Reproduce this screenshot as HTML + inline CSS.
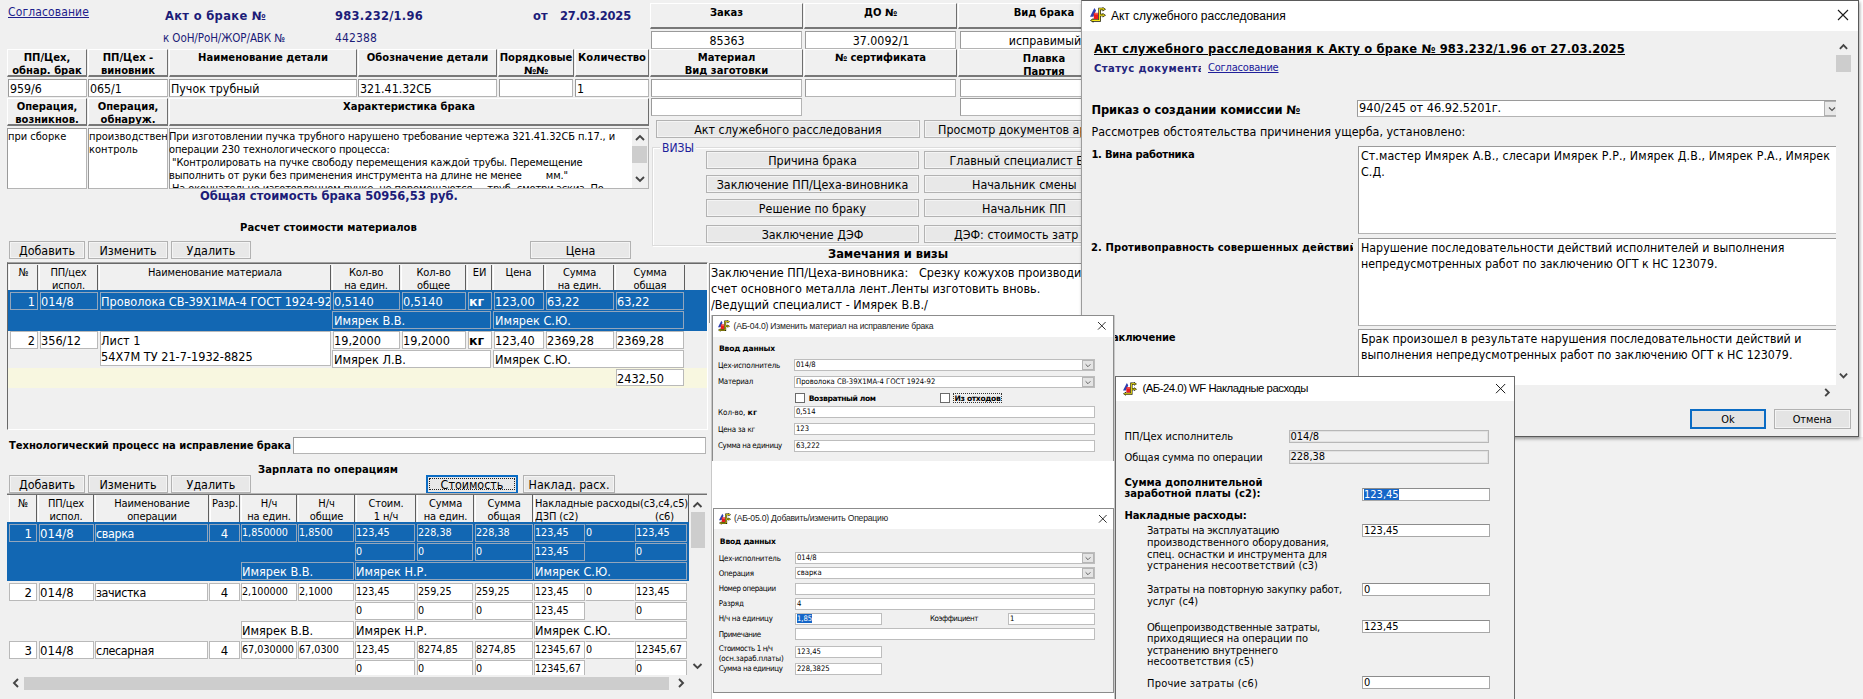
<!DOCTYPE html><html><head><meta charset="utf-8"><title>Акт о браке</title><style>
html,body{margin:0;padding:0}
body{width:1863px;height:699px;overflow:hidden;background:#fff;font-family:"DejaVu Sans Condensed","DejaVu Sans","Liberation Sans",sans-serif;font-size:12px;font-stretch:condensed;color:#000;position:relative}
.a{position:absolute;box-sizing:border-box;overflow:hidden;white-space:nowrap}
.t{overflow:visible;line-height:1}
.lib{font-stretch:normal;font-family:"Liberation Sans","DejaVu Sans",sans-serif}
.form{background:#f0f0f0}
.hd{font-stretch:normal;background:#f0f0f0;border-top:1px solid #fff;border-left:1px solid #fff;border-right:1px solid #6e6e6e;border-bottom:2px solid #787878;font-weight:bold;font-family:"DejaVu Sans","Liberation Sans",sans-serif;font-size:10px;line-height:13px;text-align:center;white-space:normal;padding-top:1px}
.in{background:#fff;border:1px solid #b4b4b4;border-top-color:#9a9a9a;border-left-color:#9a9a9a;font-size:12.3px;line-height:18px;padding-left:1px}
.ta{background:#fff;border:1px solid #b4b4b4;border-top-color:#9a9a9a;border-left-color:#9a9a9a;font-size:11px;line-height:13px;white-space:normal}
.bt{background:#e8e8e8;border:1px solid #b2b2b2;box-shadow:inset 0 0 0 1px #f4f4f4;font-size:12.4px;text-align:center;line-height:17px}
.navy{color:#1c1c78}
.b,b{font-stretch:normal;font-weight:bold;font-family:"DejaVu Sans","Liberation Sans",sans-serif}
.th{background:#f0f0f0;border-left:1px solid #fff;border-right:1px solid #5e5e5e;font-size:11px;line-height:13px;text-align:center;white-space:normal;padding-top:1px;letter-spacing:-.12px}
.c{background:#fff;border:1px solid #b9b9b9;font-size:12.6px;line-height:17px;padding-left:0}
.c.s{background:#1267b3;color:#fff;border-color:#93a6bc}
.c.sm{font-size:10.7px;line-height:15px}
.r{text-align:right;padding-right:2px}
.ctr{text-align:center}
.dlg{background:#f0f0f0;border:1px solid #6f6f6f}
.tb{background:#fff}
.sin{background:#fff;border:1px solid #bdbdbd;font-size:7.6px;line-height:10.5px;padding-left:1px}
.win{background:#fff;border:1px solid #a8a8a8;border-top-color:#8c8c8c;font-size:11px;line-height:12px;padding-left:1px}
.wdis{background:#f0f0f0;border:1px solid #b8b8b8;box-shadow:inset 0 0 0 1px #e2e2e2;font-size:11px;line-height:12px;padding-left:1px}
.hl{background:#1566c8;color:#fff}
</style></head><body>
<div class="a form" style="left:0px;top:0px;width:1082px;height:699px;"></div>
<div class="a t navy" style="left:8px;top:5.64px;font-size:12px;letter-spacing:0.119px;text-decoration:underline;color:#1e1e8c">Согласование</div>
<div class="a t navy b" style="left:165px;top:10.90px;font-size:11.5px;letter-spacing:0.327px;">Акт о браке №</div>
<div class="a t navy b" style="left:335px;top:10.90px;font-size:11.5px;letter-spacing:0.254px;">983.232/1.96</div>
<div class="a t navy b" style="left:533px;top:10.90px;font-size:11.5px;">от</div>
<div class="a t navy b" style="left:560px;top:10.90px;font-size:11.5px;letter-spacing:-0.175px;">27.03.2025</div>
<div class="a t navy" style="left:163px;top:32.70px;font-size:11.5px;letter-spacing:-0.089px;">к ОоН/РоН/ЖОР/АВК №</div>
<div class="a t navy" style="left:335px;top:32.44px;font-size:12px;letter-spacing:0.133px;">442388</div>
<div class="a hd" style="left:7px;top:49px;width:80px;height:28px;">ПП/Цех, обнар. брак</div>
<div class="a hd" style="left:88px;top:49px;width:80px;height:28px;">ПП/Цех - виновник</div>
<div class="a hd" style="left:169px;top:49px;width:188px;height:28px;">Наименование детали</div>
<div class="a hd" style="left:358px;top:49px;width:139px;height:28px;">Обозначение детали</div>
<div class="a hd" style="left:498px;top:49px;width:76px;height:28px;">Порядковые №№</div>
<div class="a hd" style="left:575px;top:49px;width:74px;height:28px;">Количество</div>
<div class="a in" style="left:8px;top:79px;width:79px;height:18px;">959/6</div>
<div class="a in" style="left:88px;top:79px;width:80px;height:18px;">065/1</div>
<div class="a in" style="left:169px;top:79px;width:188px;height:18px;">Пучок трубный</div>
<div class="a in" style="left:358px;top:79px;width:139px;height:18px;">321.41.32СБ</div>
<div class="a in" style="left:499px;top:79px;width:74px;height:18px;"></div>
<div class="a in" style="left:575px;top:79px;width:74px;height:18px;">1</div>
<div class="a hd" style="left:7px;top:98px;width:80px;height:28px;">Операция, возникнов.</div>
<div class="a hd" style="left:88px;top:98px;width:80px;height:28px;">Операция, обнаруж.</div>
<div class="a hd" style="left:169px;top:98px;width:480px;height:28px;">Характеристика брака</div>
<div class="a ta" style="left:7px;top:128px;width:80px;height:61px;padding-left:0px;padding-top:1px">при сборке</div>
<div class="a ta" style="left:88px;top:128px;width:80px;height:61px;padding-top:1px">производствен контроль</div>
<div class="a ta" style="left:169px;top:128px;width:480px;height:61px;"></div>
<div class="a" style="left:169px;top:130px;width:463px;height:58px;font-size:11px;line-height:13px;letter-spacing:-0.13px">При изготовлении пучка трубного нарушено требование чертежа 321.41.32СБ п.17., и<br>операции 230 технологического процесса:<br>&nbsp;"Контролировать на пучке свободу перемещения каждой трубы. Перемещение<br>выполнить от руки без применения инструмента на длине не менее&nbsp;&nbsp;&nbsp;&nbsp;&nbsp;&nbsp;&nbsp;&nbsp;мм."<br>&nbsp;На окончательно изготовленном пучке, не перемещаются &nbsp;&nbsp;&nbsp; труб, смотри эскиз. По</div>
<div class="a " style="left:632px;top:129px;width:16px;height:59px;background:#f0f0f0"></div>
<div class="a " style="left:632px;top:146px;width:15px;height:17px;background:#cdcdcd"></div>
<svg class="a" style="left:632px;top:129px" width="16" height="59"><path d="M4 11 L8 7 L12 11" fill="none" stroke="#454545" stroke-width="1.9"/><path d="M4 48 L8 52 L12 48" fill="none" stroke="#454545" stroke-width="1.9"/></svg>
<div class="a t navy b" style="left:200px;top:190.91px;font-size:11.5px;letter-spacing:0.021px;">Общая стоимость брака 50956,53 руб.</div>
<div class="a t  b" style="left:240px;top:222.70px;font-size:10px;letter-spacing:0.084px;">Расчет стоимости материалов</div>
<div class="a bt" style="left:9px;top:241px;width:76px;height:18px;">Добавить</div>
<div class="a bt" style="left:88px;top:241px;width:80px;height:18px;">Изменить</div>
<div class="a bt" style="left:171px;top:241px;width:80px;height:18px;">Удалить</div>
<div class="a bt" style="left:530px;top:241px;width:101px;height:18px;">Цена</div>
<div class="a " style="left:7px;top:262px;width:701px;height:168px;background:#f0f0f0;border-top:1px solid #a0a0a0;border-left:1px solid #696969;border-right:1px solid #fff;border-bottom:1px solid #fff;box-shadow:inset 0 1px 0 #696969"></div>
<div class="a th" style="left:9px;top:265px;width:29px;height:25px;">№</div>
<div class="a th" style="left:39px;top:265px;width:59px;height:25px;">ПП/цех<br>испол.</div>
<div class="a th" style="left:99px;top:265px;width:232px;height:25px;">Наименование материала</div>
<div class="a th" style="left:332px;top:265px;width:68px;height:25px;">Кол-во<br>на един.</div>
<div class="a th" style="left:401px;top:265px;width:65px;height:25px;">Кол-во<br>общее</div>
<div class="a th" style="left:467px;top:265px;width:25px;height:25px;">ЕИ</div>
<div class="a th" style="left:493px;top:265px;width:51px;height:25px;">Цена</div>
<div class="a th" style="left:545px;top:265px;width:69px;height:25px;">Сумма<br>на един.</div>
<div class="a th" style="left:615px;top:265px;width:70px;height:25px;">Сумма<br>общая</div>
<div class="a " style="left:8px;top:290px;width:699px;height:41px;background:#1267b3"></div>
<div class="a c s r" style="left:10px;top:292px;width:28px;height:18px;">1</div>
<div class="a c s" style="left:40px;top:292px;width:58px;height:18px;">014/8</div>
<div class="a c s" style="left:100px;top:292px;width:231px;height:18px;">Проволока СВ-39Х1МА-4 ГОСТ 1924-92</div>
<div class="a c s" style="left:333px;top:292px;width:67px;height:18px;">0,5140</div>
<div class="a c s" style="left:402px;top:292px;width:64px;height:18px;">0,5140</div>
<div class="a c s b" style="left:468px;top:292px;width:24px;height:18px;">кг</div>
<div class="a c s" style="left:494px;top:292px;width:50px;height:18px;">123,00</div>
<div class="a c s" style="left:546px;top:292px;width:68px;height:18px;">63,22</div>
<div class="a c s" style="left:616px;top:292px;width:68px;height:18px;">63,22</div>
<div class="a c s" style="left:332px;top:311px;width:159px;height:18px;padding-left:1px">Имярек В.В.</div>
<div class="a c s" style="left:493px;top:311px;width:191px;height:18px;padding-left:1px">Имярек С.Ю.</div>
<div class="a c r" style="left:10px;top:331px;width:28px;height:18px;">2</div>
<div class="a c" style="left:40px;top:331px;width:58px;height:18px;">356/12</div>
<div class="a c" style="left:100px;top:331px;width:231px;height:35px;white-space:normal;line-height:16px;padding-top:1px">Лист 1<br>54Х7М ТУ 21-7-1932-8825</div>
<div class="a c" style="left:333px;top:331px;width:67px;height:18px;">19,2000</div>
<div class="a c" style="left:402px;top:331px;width:64px;height:18px;">19,2000</div>
<div class="a c b" style="left:468px;top:331px;width:24px;height:18px;">кг</div>
<div class="a c" style="left:494px;top:331px;width:50px;height:18px;">123,40</div>
<div class="a c" style="left:546px;top:331px;width:68px;height:18px;">2369,28</div>
<div class="a c" style="left:616px;top:331px;width:68px;height:18px;">2369,28</div>
<div class="a c" style="left:332px;top:350px;width:159px;height:18px;padding-left:1px">Имярек Л.В.</div>
<div class="a c" style="left:493px;top:350px;width:191px;height:18px;padding-left:1px">Имярек С.Ю.</div>
<div class="a " style="left:8px;top:368px;width:699px;height:20px;background:#f8f7e0"></div>
<div class="a c" style="left:616px;top:369px;width:68px;height:17px;">2432,50</div>
<div class="a t  b" style="left:9px;top:440.70px;font-size:10px;letter-spacing:-0.057px;">Технологический процесс на исправление брака</div>
<div class="a in" style="left:293px;top:437px;width:413px;height:17px;"></div>
<div class="a t  b" style="left:258px;top:464.70px;font-size:10px;letter-spacing:0.059px;">Зарплата по операциям</div>
<div class="a bt" style="left:9px;top:475px;width:76px;height:18px;line-height:17px">Добавить</div>
<div class="a bt" style="left:88px;top:475px;width:80px;height:18px;line-height:17px">Изменить</div>
<div class="a bt" style="left:171px;top:475px;width:80px;height:18px;line-height:17px">Удалить</div>
<div class="a bt" style="left:523px;top:475px;width:92px;height:18px;line-height:17px">Наклад. расх.</div>
<div class="a bt" style="left:426px;top:475px;width:92px;height:19px;border:2px solid #0b6cc4;line-height:15px;box-shadow:none">Стоимость</div>
<div class="a " style="left:429px;top:478px;width:86px;height:12px;border:1px dotted #222"></div>
<div class="a " style="left:7px;top:493px;width:700px;height:198px;background:#f0f0f0;border-top:1px solid #b4b4b4;box-shadow:inset 0 1px 0 #707070"></div>
<div class="a th" style="left:9px;top:495px;width:28px;height:27px;padding-top:2px">№</div>
<div class="a th" style="left:38px;top:495px;width:56px;height:27px;padding-top:2px">ПП/цех<br>испол.</div>
<div class="a th" style="left:95px;top:495px;width:114px;height:27px;padding-top:2px">Наименование<br>операции</div>
<div class="a th" style="left:210px;top:495px;width:30px;height:27px;padding-top:2px">Разр.</div>
<div class="a th" style="left:241px;top:495px;width:56px;height:27px;padding-top:2px">Н/ч<br>на един.</div>
<div class="a th" style="left:298px;top:495px;width:57px;height:27px;padding-top:2px">Н/ч<br>общие</div>
<div class="a th" style="left:356px;top:495px;width:60px;height:27px;padding-top:2px">Стоим.<br>1 н/ч</div>
<div class="a th" style="left:417px;top:495px;width:57px;height:27px;padding-top:2px">Сумма<br>на един.</div>
<div class="a th" style="left:475px;top:495px;width:58px;height:27px;padding-top:2px">Сумма<br>общая</div>
<div class="a th" style="left:534px;top:495px;width:155px;height:27px;text-align:left;white-space:nowrap;letter-spacing:-.1px;padding-top:2px">Накладные расходы(с3,с4,с5)<br>ДЗП (с2)<span style="position:absolute;right:14px;top:15px">(с6)</span></div>
<div class="a " style="left:7px;top:522px;width:682px;height:59px;background:#1267b3"></div>
<div class="a" style="left:0;top:0;width:706px;height:675px">
<div class="a c r s" style="left:9px;top:524px;width:28px;height:18px;font-size:13px;padding-right:4px">1</div>
<div class="a c s" style="left:39px;top:524px;width:55px;height:18px;font-size:13px">014/8</div>
<div class="a c s" style="left:95px;top:524px;width:113px;height:18px;font-size:12.4px;letter-spacing:-.35px">сварка</div>
<div class="a c ctr s" style="left:209px;top:524px;width:31px;height:18px;font-size:13px;padding-left:0">4</div>
<div class="a c sm s" style="left:241px;top:524px;width:56px;height:18px;">1,850000</div>
<div class="a c sm s" style="left:298px;top:524px;width:56px;height:18px;">1,8500</div>
<div class="a c sm s" style="left:355px;top:524px;width:60px;height:18px;">123,45</div>
<div class="a c sm s" style="left:417px;top:524px;width:56px;height:18px;">228,38</div>
<div class="a c sm s" style="left:475px;top:524px;width:58px;height:18px;">228,38</div>
<div class="a c sm s" style="left:534px;top:524px;width:51px;height:18px;">123,45</div>
<div class="a c sm s" style="left:585px;top:524px;width:50px;height:18px;border-left-color:transparent;border-right-color:transparent">0</div>
<div class="a c sm s" style="left:635px;top:524px;width:52px;height:18px;">123,45</div>
<div class="a c sm s" style="left:355px;top:543px;width:60px;height:18px;">0</div>
<div class="a c sm s" style="left:417px;top:543px;width:56px;height:18px;">0</div>
<div class="a c sm s" style="left:475px;top:543px;width:58px;height:18px;">0</div>
<div class="a c sm s" style="left:534px;top:543px;width:51px;height:18px;">123,45</div>
<div class="a c sm s" style="left:635px;top:543px;width:52px;height:18px;">0</div>
<div class="a c s" style="left:241px;top:562px;width:113px;height:18px;">Имярек В.В.</div>
<div class="a c s" style="left:355px;top:562px;width:178px;height:18px;">Имярек Н.Р.</div>
<div class="a c s" style="left:534px;top:562px;width:153px;height:18px;">Имярек С.Ю.</div>
<div class="a c r" style="left:9px;top:583px;width:28px;height:18px;font-size:13px;padding-right:4px">2</div>
<div class="a c" style="left:39px;top:583px;width:55px;height:18px;font-size:13px">014/8</div>
<div class="a c" style="left:95px;top:583px;width:113px;height:18px;font-size:12.4px;letter-spacing:-.35px">зачистка</div>
<div class="a c ctr" style="left:209px;top:583px;width:31px;height:18px;font-size:13px;padding-left:0">4</div>
<div class="a c sm" style="left:241px;top:583px;width:56px;height:18px;">2,100000</div>
<div class="a c sm" style="left:298px;top:583px;width:56px;height:18px;">2,1000</div>
<div class="a c sm" style="left:355px;top:583px;width:60px;height:18px;">123,45</div>
<div class="a c sm" style="left:417px;top:583px;width:56px;height:18px;">259,25</div>
<div class="a c sm" style="left:475px;top:583px;width:58px;height:18px;">259,25</div>
<div class="a c sm" style="left:534px;top:583px;width:51px;height:18px;">123,45</div>
<div class="a c sm" style="left:585px;top:583px;width:50px;height:18px;border-left-color:transparent;border-right-color:transparent">0</div>
<div class="a c sm" style="left:635px;top:583px;width:52px;height:18px;">123,45</div>
<div class="a c sm" style="left:355px;top:602px;width:60px;height:18px;">0</div>
<div class="a c sm" style="left:417px;top:602px;width:56px;height:18px;">0</div>
<div class="a c sm" style="left:475px;top:602px;width:58px;height:18px;">0</div>
<div class="a c sm" style="left:534px;top:602px;width:51px;height:18px;">123,45</div>
<div class="a c sm" style="left:635px;top:602px;width:52px;height:18px;">0</div>
<div class="a c" style="left:241px;top:621px;width:113px;height:18px;">Имярек В.В.</div>
<div class="a c" style="left:355px;top:621px;width:178px;height:18px;">Имярек Н.Р.</div>
<div class="a c" style="left:534px;top:621px;width:153px;height:18px;">Имярек С.Ю.</div>
<div class="a c r" style="left:9px;top:641px;width:28px;height:18px;font-size:13px;padding-right:4px">3</div>
<div class="a c" style="left:39px;top:641px;width:55px;height:18px;font-size:13px">014/8</div>
<div class="a c" style="left:95px;top:641px;width:113px;height:18px;font-size:12.4px;letter-spacing:-.35px">слесарная</div>
<div class="a c ctr" style="left:209px;top:641px;width:31px;height:18px;font-size:13px;padding-left:0">4</div>
<div class="a c sm" style="left:241px;top:641px;width:56px;height:18px;">67,030000</div>
<div class="a c sm" style="left:298px;top:641px;width:56px;height:18px;">67,0300</div>
<div class="a c sm" style="left:355px;top:641px;width:60px;height:18px;">123,45</div>
<div class="a c sm" style="left:417px;top:641px;width:56px;height:18px;">8274,85</div>
<div class="a c sm" style="left:475px;top:641px;width:58px;height:18px;">8274,85</div>
<div class="a c sm" style="left:534px;top:641px;width:51px;height:18px;">12345,67</div>
<div class="a c sm" style="left:585px;top:641px;width:50px;height:18px;border-left-color:transparent;border-right-color:transparent">0</div>
<div class="a c sm" style="left:635px;top:641px;width:52px;height:18px;">12345,67</div>
<div class="a c sm" style="left:355px;top:660px;width:60px;height:18px;">0</div>
<div class="a c sm" style="left:417px;top:660px;width:56px;height:18px;">0</div>
<div class="a c sm" style="left:475px;top:660px;width:58px;height:18px;">0</div>
<div class="a c sm" style="left:534px;top:660px;width:51px;height:18px;">12345,67</div>
<div class="a c sm" style="left:635px;top:660px;width:52px;height:18px;">0</div>
<div class="a c" style="left:241px;top:679px;width:113px;height:18px;">Имярек В.В.</div>
<div class="a c" style="left:355px;top:679px;width:178px;height:18px;">Имярек Н.Р.</div>
<div class="a c" style="left:534px;top:679px;width:153px;height:18px;">Имярек С.Ю.</div>
</div>
<div class="a " style="left:689px;top:495px;width:17px;height:180px;background:#f0f0f0"></div>
<div class="a " style="left:691px;top:512px;width:14px;height:36px;background:#cdcdcd"></div>
<svg class="a" style="left:689px;top:495px" width="17" height="180"><path d="M4.5 12 L8.5 8 L12.5 12" fill="none" stroke="#454545" stroke-width="1.9"/><path d="M4.5 169 L8.5 173 L12.5 169" fill="none" stroke="#454545" stroke-width="1.9"/></svg>
<div class="a " style="left:9px;top:675px;width:697px;height:16px;background:#f0f0f0"></div>
<div class="a " style="left:24px;top:677px;width:645px;height:13px;background:#cdcdcd"></div>
<svg class="a" style="left:9px;top:675px" width="697" height="16"><path d="M9 4 L5 8 L9 12" fill="none" stroke="#454545" stroke-width="1.9"/><path d="M670 4 L674 8 L670 12" fill="none" stroke="#454545" stroke-width="1.9"/></svg>
<div class="a hd" style="left:650px;top:3px;width:153px;height:26px;padding-top:2px">Заказ</div>
<div class="a hd" style="left:804px;top:3px;width:153px;height:26px;padding-top:2px">ДО №</div>
<div class="a hd" style="left:958px;top:3px;width:172px;height:26px;padding-top:2px">Вид брака</div>
<div class="a in ctr" style="left:651px;top:31px;width:151px;height:18px;">85363</div>
<div class="a in ctr" style="left:805px;top:31px;width:151px;height:18px;">37.0092/1</div>
<div class="a in ctr" style="left:960px;top:31px;width:169px;height:18px;">исправимый</div>
<div class="a hd" style="left:650px;top:49px;width:153px;height:28px;">Материал<br>Вид заготовки</div>
<div class="a hd" style="left:804px;top:49px;width:153px;height:28px;">№ сертификата</div>
<div class="a hd" style="left:958px;top:49px;width:172px;height:28px;padding-top:2px">Плавка<br>Партия</div>
<div class="a in" style="left:651px;top:79px;width:151px;height:18px;"></div>
<div class="a in" style="left:805px;top:79px;width:151px;height:18px;"></div>
<div class="a in" style="left:960px;top:79px;width:130px;height:18px;"></div>
<div class="a in" style="left:651px;top:98px;width:151px;height:18px;"></div>
<div class="a in" style="left:960px;top:98px;width:130px;height:18px;"></div>
<div class="a bt" style="left:656px;top:120px;width:264px;height:18px;">Акт служебного расследования</div>
<div class="a bt" style="left:924px;top:120px;width:170px;height:18px;text-align:left;padding-left:13px">Просмотр документов ар</div>
<div class="a " style="left:652px;top:147px;width:440px;height:99px;border:1px solid #dcdcdc;box-shadow:inset 1px 1px 0 #fff, 1px 1px 0 #fff"></div>
<div class="a " style="left:660px;top:140px;width:36px;height:15px;background:#f0f0f0"></div>
<div class="a t navy" style="left:662px;top:141.64px;font-size:12px;letter-spacing:0.018px;color:#20209a">ВИЗЫ</div>
<div class="a bt" style="left:706px;top:151px;width:213px;height:18px;">Причина брака</div>
<div class="a bt" style="left:924px;top:151px;width:170px;height:18px;text-align:left;padding-left:24.5px">Главный специалист Б</div>
<div class="a bt" style="left:706px;top:175px;width:213px;height:18px;">Заключение ПП/Цеха-виновника</div>
<div class="a bt" style="left:924px;top:175px;width:170px;height:18px;text-align:left;padding-left:47px">Начальник смены</div>
<div class="a bt" style="left:706px;top:199px;width:213px;height:18px;">Решение по браку</div>
<div class="a bt" style="left:924px;top:199px;width:170px;height:18px;text-align:left;padding-left:57px">Начальник ПП</div>
<div class="a bt" style="left:706px;top:225px;width:213px;height:18px;">Заключение ДЭФ</div>
<div class="a bt" style="left:924px;top:225px;width:170px;height:18px;text-align:left;padding-left:29px">ДЭФ: стоимость затр</div>
<div class="a t  b" style="left:828px;top:248.91px;font-size:11.5px;letter-spacing:-0.041px;">Замечания и визы</div>
<div class="a " style="left:709px;top:263px;width:380px;height:60px;background:#fff;border-top:1px solid #8a8a8a;border-left:1px solid #8a8a8a"></div>
<div class="a" style="left:711px;top:265px;width:376px;height:52px;font-size:12.5px;line-height:16px">Заключение ПП/Цеха-виновника: &nbsp;&nbsp;Срезку кожухов производить<br>счет основного металла лент.Ленты изготовить вновь.<br>/Ведущий специалист - Имярек В.В./</div>
<div class="a " style="left:1515px;top:437px;width:348px;height:262px;background:#f1f1f1"></div>
<div class="a " style="left:1076px;top:0px;width:787px;height:442px;background:transparent;box-shadow:none"></div>
<div class="a" style="left:1081px;top:0;width:778px;height:437px;box-shadow:1px 2px 3px 0 rgba(0,0,0,.36);background:#f0f0f0"></div>
<div class="a dlg" style="left:1081px;top:0px;width:778px;height:437px;border-color:#5a5a5a;border-left-color:#9c9c9c"></div>
<div class="a tb" style="left:1082px;top:1px;width:776px;height:30px;"></div>
<svg class="a" style="left:1090px;top:7px" width="16" height="16" viewBox="0 0 16 16"><path d="M4.4 1 L6 3.6 L3.4 9.8 H0 Z" fill="#2f3fb0"/><rect x="3.8" y="5.8" width="4.6" height="6.4" fill="#ee1c1c"/><rect x="4.6" y="6.6" width="3.8" height=".6" fill="#ffb0b0"/><path d="M13.5 1.9 H9.6 V13.4 H2.5 M9.6 8.1 H13.5" fill="none" stroke="#151500" stroke-width="2.5" stroke-linejoin="miter"/><path d="M12.6 0 L16 2.2 L12.6 4.4 Z M12.6 6 L16 8.2 L12.6 10.4 Z M3.4 11 L0 13.4 L3.4 15.8 Z" fill="#151500"/><path d="M13.5 1.9 H9.6 V13.4 H2.5 M9.6 8.1 H13.5" fill="none" stroke="#f5e61a" stroke-width="1.1"/><path d="M13.2 1 L15 2.2 L13.2 3.4 Z M13.2 7 L15 8.2 L13.2 9.4 Z M2.8 12.2 L1 13.4 L2.8 14.6 Z" fill="#f5e61a"/></svg>
<div class="a t  lib" style="left:1111px;top:9.84px;font-size:12px;letter-spacing:-0.025px;">Акт служебного расследования</div>
<svg class="a" style="left:1837px;top:9px" width="12" height="12"><path d="M1 1 L11 11 M11 1 L1 11" stroke="#1a1a1a" stroke-width="1.1" fill="none"/></svg>
<div class="a t  b" style="left:1094px;top:44.20px;font-size:11.5px;letter-spacing:0.195px;text-decoration:underline">Акт служебного расследования к Акту о браке № 983.232/1.96 от 27.03.2025</div>
<div class="a " style="left:1094px;top:61px;width:107px;height:14px;"><span class="b" style="color:#23237c;font-size:10px;line-height:14px;letter-spacing:.42px">Статус документа</span></div>
<div class="a t " style="left:1208px;top:62.17px;font-size:11px;letter-spacing:-0.203px;text-decoration:underline;color:#20209a">Согласование</div>
<div class="a t  b" style="left:1091.4px;top:104.70px;font-size:11.5px;letter-spacing:-0.098px;">Приказ о создании комиссии №</div>
<div class="a t " style="left:1091.4px;top:125.93px;font-size:12.4px;letter-spacing:0.020px;">Рассмотрев обстоятельства причинения ущерба, установлено:</div>
<div class="a" style="left:1082px;top:31px;width:754px;height:354px">
<div class="a in" style="left:275px;top:69px;width:480px;height:17px;line-height:14px;font-size:12.6px;padding-left:1px">940/245 от 46.92.5201г.</div>
<div class="a " style="left:742px;top:70px;width:14px;height:15px;background:#e8e8e8;border:1px solid #b0b0b0"></div>
<div class="a in" style="left:276px;top:115px;width:481px;height:88px;white-space:normal;line-height:16px;font-size:12.3px;padding:1px 0 0 2px;letter-spacing:.1px">Ст.мастер Имярек А.В., слесари Имярек Р.Р., Имярек Д.В., Имярек Р.А., Имярек<br>С.Д.</div>
<div class="a in" style="left:276px;top:207px;width:481px;height:88px;white-space:normal;line-height:16px;font-size:12.3px;padding:1px 0 0 2px">Нарушение последовательности действий исполнителей и выполнения<br>непредусмотренных работ по заключению ОГТ к НС 123079.</div>
<div class="a in" style="left:276px;top:298px;width:481px;height:88px;white-space:normal;line-height:16px;font-size:12.3px;padding:1px 0 0 2px">Брак произошел в результате нарушения последовательности действий и<br>выполнения непредусмотренных работ по заключению ОГТ к НС 123079.</div>
</div>
<svg class="a" style="left:0;top:0" width="1863" height="699"><path d="M1829 107.5 L1832 110.5 L1835 107.5" fill="none" stroke="#555" stroke-width="1.2"/></svg>
<div class="a t  b" style="left:1091.4px;top:149.70px;font-size:10px;letter-spacing:-0.236px;">1. Вина работника</div>
<div class="a " style="left:1091px;top:240px;width:262px;height:15px;"><span class="b" style="font-size:10px;line-height:14px;letter-spacing:.08px">2. Противоправность совершенных действий</span></div>
<div class="a t  b" style="left:1091.4px;top:332.70px;font-size:10px;letter-spacing:-0.175px;">3. Заключение</div>
<div class="a " style="left:1836px;top:38px;width:16px;height:347px;background:#f0f0f0"></div>
<div class="a " style="left:1836px;top:55px;width:15px;height:17px;background:#cdcdcd"></div>
<svg class="a" style="left:0;top:0" width="1863" height="699"><path d="M1839.9 48.8 L1843.5 45.2 L1847.1 48.8" fill="none" stroke="#454545" stroke-width="1.9"/></svg>
<svg class="a" style="left:0;top:0" width="1863" height="699"><path d="M1839.9 373.7 L1843.5 377.3 L1847.1 373.7" fill="none" stroke="#454545" stroke-width="1.9"/></svg>
<svg class="a" style="left:0;top:0" width="1863" height="699"><path d="M1825.2 388.9 L1828.8 392.5 L1825.2 396.1" fill="none" stroke="#454545" stroke-width="1.9"/></svg>
<div class="a bt" style="left:1690px;top:408.5px;width:76px;height:20.5px;border:2px solid #0b6cc4;line-height:17px;box-shadow:none;background:#e4e4e4;font-size:10.9px">Ok</div>
<div class="a bt" style="left:1774px;top:408.5px;width:76.5px;height:20.5px;line-height:19px;background:#e4e4e4;font-size:10.9px">Отмена</div>
<div class="a " style="left:711px;top:315px;width:404px;height:384px;background:#fff;border-left:1px solid #c8c8c8;border-right:1px solid #c8c8c8"></div>
<div class="a dlg" style="left:712px;top:315px;width:402px;height:146px;border-bottom:none;border-color:#8c8c8c"></div>
<div class="a tb" style="left:713px;top:316px;width:400px;height:21px;"></div>
<svg class="a" style="left:718px;top:320px" width="12" height="12" viewBox="0 0 16 16"><path d="M4.4 1 L6 3.6 L3.4 9.8 H0 Z" fill="#2f3fb0"/><rect x="3.8" y="5.8" width="4.6" height="6.4" fill="#ee1c1c"/><rect x="4.6" y="6.6" width="3.8" height=".6" fill="#ffb0b0"/><path d="M13.5 1.9 H9.6 V13.4 H2.5 M9.6 8.1 H13.5" fill="none" stroke="#151500" stroke-width="2.5" stroke-linejoin="miter"/><path d="M12.6 0 L16 2.2 L12.6 4.4 Z M12.6 6 L16 8.2 L12.6 10.4 Z M3.4 11 L0 13.4 L3.4 15.8 Z" fill="#151500"/><path d="M13.5 1.9 H9.6 V13.4 H2.5 M9.6 8.1 H13.5" fill="none" stroke="#f5e61a" stroke-width="1.1"/><path d="M13.2 1 L15 2.2 L13.2 3.4 Z M13.2 7 L15 8.2 L13.2 9.4 Z M2.8 12.2 L1 13.4 L2.8 14.6 Z" fill="#f5e61a"/></svg>
<div class="a t  lib" style="left:733.5px;top:321.74px;font-size:8.6px;letter-spacing:-0.220px;color:#222">(АБ-04.0) Изменить материал на исправление брака</div>
<svg class="a" style="left:1096.7px;top:320.7px" width="9.6" height="9.6"><path d="M1 1 L8.6 8.6 M8.6 1 L1 8.6" stroke="#1a1a1a" stroke-width="0.9" fill="none"/></svg>
<div class="a t  b" style="left:719px;top:344.97px;font-size:7.6px;letter-spacing:-0.196px;">Ввод данных</div>
<div class="a t " style="left:718px;top:361.61px;font-size:7.9px;letter-spacing:-0.216px;">Цех-исполнитель</div>
<div class="a t " style="left:718px;top:378.11px;font-size:7.9px;letter-spacing:-0.254px;">Материал</div>
<div class="a sin" style="left:794px;top:359px;width:301px;height:12px;">014/8</div>
<div class="a " style="left:1082px;top:360px;width:12px;height:10px;background:#e4e4e4;border:1px solid #b5b5b5"></div>
<svg class="a" style="left:0;top:0" width="1863" height="699"><path d="M1085.6 364.3 L1088 366.7 L1090.4 364.3" fill="none" stroke="#555" stroke-width="0.9"/></svg>
<div class="a sin" style="left:794px;top:376px;width:301px;height:12px;">Проволока СВ-39Х1МА-4 ГОСТ 1924-92</div>
<div class="a " style="left:1082px;top:377px;width:12px;height:10px;background:#e4e4e4;border:1px solid #b5b5b5"></div>
<svg class="a" style="left:0;top:0" width="1863" height="699"><path d="M1085.6 381.3 L1088 383.7 L1090.4 381.3" fill="none" stroke="#555" stroke-width="0.9"/></svg>
<div class="a " style="left:795px;top:393px;width:10px;height:10px;background:#fff;border:1px solid #6a6a6a"></div>
<div class="a t  b" style="left:808.7px;top:394.97px;font-size:7.6px;letter-spacing:-0.379px;">Возвратный лом</div>
<div class="a " style="left:940px;top:393px;width:10px;height:10px;background:#fff;border:1px solid #6a6a6a"></div>
<div class="a " style="left:953px;top:392.5px;width:49px;height:10.5px;border:1px dotted #333"></div>
<div class="a t  b" style="left:954.5px;top:394.97px;font-size:7.6px;letter-spacing:-0.334px;">Из отходов</div>
<div class="a t " style="left:718px;top:408.91px;font-size:7.9px;">Кол-во, <b>кг</b></div>
<div class="a t " style="left:718px;top:425.61px;font-size:7.9px;letter-spacing:-0.257px;">Цена за кг</div>
<div class="a t " style="left:718px;top:442.21px;font-size:7.9px;letter-spacing:-0.374px;">Сумма на единицу</div>
<div class="a sin" style="left:794px;top:406px;width:301px;height:12px;">0,514</div>
<div class="a sin" style="left:794px;top:423px;width:301px;height:12px;">123</div>
<div class="a sin" style="left:794px;top:440px;width:301px;height:12px;">63,222</div>
<div class="a dlg" style="left:713px;top:508px;width:401px;height:185px;border-color:#8c8c8c"></div>
<div class="a tb" style="left:714px;top:509px;width:399px;height:20px;"></div>
<svg class="a" style="left:719px;top:512.5px" width="12" height="12" viewBox="0 0 16 16"><path d="M4.4 1 L6 3.6 L3.4 9.8 H0 Z" fill="#2f3fb0"/><rect x="3.8" y="5.8" width="4.6" height="6.4" fill="#ee1c1c"/><rect x="4.6" y="6.6" width="3.8" height=".6" fill="#ffb0b0"/><path d="M13.5 1.9 H9.6 V13.4 H2.5 M9.6 8.1 H13.5" fill="none" stroke="#151500" stroke-width="2.5" stroke-linejoin="miter"/><path d="M12.6 0 L16 2.2 L12.6 4.4 Z M12.6 6 L16 8.2 L12.6 10.4 Z M3.4 11 L0 13.4 L3.4 15.8 Z" fill="#151500"/><path d="M13.5 1.9 H9.6 V13.4 H2.5 M9.6 8.1 H13.5" fill="none" stroke="#f5e61a" stroke-width="1.1"/><path d="M13.2 1 L15 2.2 L13.2 3.4 Z M13.2 7 L15 8.2 L13.2 9.4 Z M2.8 12.2 L1 13.4 L2.8 14.6 Z" fill="#f5e61a"/></svg>
<div class="a t  lib" style="left:734px;top:514.14px;font-size:8.6px;letter-spacing:-0.199px;color:#222">(АБ-05.0) Добавить/изменить Операцию</div>
<svg class="a" style="left:1097.7px;top:513.5px" width="9.6" height="9.6"><path d="M1 1 L8.6 8.6 M8.6 1 L1 8.6" stroke="#1a1a1a" stroke-width="0.9" fill="none"/></svg>
<div class="a t  b" style="left:719.8px;top:537.57px;font-size:7.6px;letter-spacing:-0.196px;">Ввод данных</div>
<div class="a t " style="left:718.7px;top:554.81px;font-size:7.9px;letter-spacing:-0.216px;">Цех-исполнитель</div>
<div class="a t " style="left:718.7px;top:569.91px;font-size:7.9px;letter-spacing:-0.277px;">Операция</div>
<div class="a t " style="left:718.7px;top:585.01px;font-size:7.9px;letter-spacing:-0.394px;">Номер операции</div>
<div class="a t " style="left:718.7px;top:600.31px;font-size:7.9px;letter-spacing:-0.187px;">Разряд</div>
<div class="a t " style="left:718.7px;top:615.41px;font-size:7.9px;letter-spacing:-0.262px;">Н/ч на единицу</div>
<div class="a t " style="left:718.7px;top:630.61px;font-size:7.9px;letter-spacing:-0.441px;">Примечание</div>
<div class="a t " style="left:718.7px;top:665.41px;font-size:7.9px;letter-spacing:-0.374px;">Сумма на единицу</div>
<div class="a t " style="left:718.7px;top:645.11px;font-size:7.9px;letter-spacing:-0.419px;">Стоимость 1 н/ч</div>
<div class="a t " style="left:718.7px;top:654.61px;font-size:7.9px;letter-spacing:-0.156px;">(осн.зараб.платы)</div>
<div class="a sin" style="left:795px;top:552px;width:300px;height:12px;">014/8</div>
<div class="a " style="left:1082px;top:553px;width:12px;height:10px;background:#e4e4e4;border:1px solid #b5b5b5"></div>
<svg class="a" style="left:0;top:0" width="1863" height="699"><path d="M1085.6 557.3 L1088 559.7 L1090.4 557.3" fill="none" stroke="#555" stroke-width="0.9"/></svg>
<div class="a sin" style="left:795px;top:567px;width:300px;height:12px;">сварка</div>
<div class="a " style="left:1082px;top:568px;width:12px;height:10px;background:#e4e4e4;border:1px solid #b5b5b5"></div>
<svg class="a" style="left:0;top:0" width="1863" height="699"><path d="M1085.6 572.3 L1088 574.7 L1090.4 572.3" fill="none" stroke="#555" stroke-width="0.9"/></svg>
<div class="a sin" style="left:795px;top:583px;width:300px;height:12px;"></div>
<div class="a sin" style="left:795px;top:598px;width:300px;height:12px;">4</div>
<div class="a sin" style="left:795px;top:613px;width:87px;height:12px;padding-left:1px"><span class="hl">1,85</span></div>
<div class="a t " style="left:930px;top:615.41px;font-size:7.9px;letter-spacing:-0.425px;">Коэффициент</div>
<div class="a sin" style="left:1008px;top:613px;width:87px;height:12px;">1</div>
<div class="a sin" style="left:795px;top:628px;width:300px;height:12px;"></div>
<div class="a sin" style="left:795px;top:646px;width:87px;height:12px;">123,45</div>
<div class="a sin" style="left:795px;top:663px;width:87px;height:12px;">228,3825</div>
<div class="a" style="left:1115px;top:376px;width:400px;height:330px;background:#f0f0f0"></div>
<div class="a dlg" style="left:1115px;top:376px;width:400px;height:330px;border-color:#6a6a6a"></div>
<div class="a tb" style="left:1116px;top:377px;width:398px;height:24px;"></div>
<svg class="a" style="left:1123px;top:382px" width="14" height="14" viewBox="0 0 16 16"><path d="M4.4 1 L6 3.6 L3.4 9.8 H0 Z" fill="#2f3fb0"/><rect x="3.8" y="5.8" width="4.6" height="6.4" fill="#ee1c1c"/><rect x="4.6" y="6.6" width="3.8" height=".6" fill="#ffb0b0"/><path d="M13.5 1.9 H9.6 V13.4 H2.5 M9.6 8.1 H13.5" fill="none" stroke="#151500" stroke-width="2.5" stroke-linejoin="miter"/><path d="M12.6 0 L16 2.2 L12.6 4.4 Z M12.6 6 L16 8.2 L12.6 10.4 Z M3.4 11 L0 13.4 L3.4 15.8 Z" fill="#151500"/><path d="M13.5 1.9 H9.6 V13.4 H2.5 M9.6 8.1 H13.5" fill="none" stroke="#f5e61a" stroke-width="1.1"/><path d="M13.2 1 L15 2.2 L13.2 3.4 Z M13.2 7 L15 8.2 L13.2 9.4 Z M2.8 12.2 L1 13.4 L2.8 14.6 Z" fill="#f5e61a"/></svg>
<div class="a t  lib" style="left:1142.4px;top:383.26px;font-size:11.4px;letter-spacing:-0.511px;">(АБ-24.0) WF Накладные расходы</div>
<svg class="a" style="left:1494.9px;top:383.4px" width="11.2" height="11.2"><path d="M1 1 L10.2 10.2 M10.2 1 L1 10.2" stroke="#1a1a1a" stroke-width="1.0" fill="none"/></svg>
<div class="a t " style="left:1124.5px;top:430.97px;font-size:11px;letter-spacing:0.003px;">ПП/Цех исполнитель</div>
<div class="a t " style="left:1124.5px;top:451.77px;font-size:11px;letter-spacing:-0.088px;">Общая сумма по операции</div>
<div class="a wdis" style="left:1288.5px;top:429.5px;width:200.5px;height:13.5px;">014/8</div>
<div class="a wdis" style="left:1288.5px;top:450px;width:200.5px;height:13.5px;">228,38</div>
<div class="a t  b" style="left:1124.5px;top:477.70px;font-size:10px;letter-spacing:0.029px;">Сумма дополнительной</div>
<div class="a t  b" style="left:1124.5px;top:489.00px;font-size:10px;letter-spacing:0.013px;">заработной платы (с2):</div>
<div class="a win" style="left:1362px;top:487.5px;width:127.5px;height:13px;"><span class="hl">123,45</span></div>
<div class="a t  b" style="left:1124.5px;top:510.70px;font-size:10px;letter-spacing:-0.141px;">Накладные расходы:</div>
<div class="a t " style="left:1147px;top:525.37px;font-size:11px;letter-spacing:-0.252px;">Затраты на эксплуатацию</div>
<div class="a t " style="left:1147px;top:537.07px;font-size:11px;letter-spacing:-0.029px;">производственного оборудования,</div>
<div class="a t " style="left:1147px;top:548.87px;font-size:11px;letter-spacing:-0.054px;">спец. оснастки и инструмента для</div>
<div class="a t " style="left:1147px;top:560.47px;font-size:11px;letter-spacing:0.033px;">устранения несоответствий (с3)</div>
<div class="a t " style="left:1147px;top:584.17px;font-size:11px;letter-spacing:-0.177px;">Затраты на повторную закупку работ,</div>
<div class="a t " style="left:1147px;top:595.87px;font-size:11px;letter-spacing:-0.028px;">услуг (с4)</div>
<div class="a t " style="left:1147px;top:621.87px;font-size:11px;letter-spacing:-0.166px;">Общепроизводственные затраты,</div>
<div class="a t " style="left:1147px;top:633.37px;font-size:11px;letter-spacing:-0.043px;">приходящиеся на операции по</div>
<div class="a t " style="left:1147px;top:644.87px;font-size:11px;letter-spacing:-0.088px;">устранению внутреннего</div>
<div class="a t " style="left:1147px;top:656.47px;font-size:11px;letter-spacing:0.075px;">несоответствия (с5)</div>
<div class="a t " style="left:1147px;top:677.87px;font-size:11px;letter-spacing:0.215px;">Прочие затраты (с6)</div>
<div class="a win" style="left:1362px;top:524px;width:127.5px;height:13px;">123,45</div>
<div class="a win" style="left:1362px;top:582.7px;width:127.5px;height:13px;">0</div>
<div class="a win" style="left:1362px;top:620.4px;width:127.5px;height:13px;">123,45</div>
<div class="a win" style="left:1362px;top:676px;width:127.5px;height:13px;">0</div>
</body></html>
